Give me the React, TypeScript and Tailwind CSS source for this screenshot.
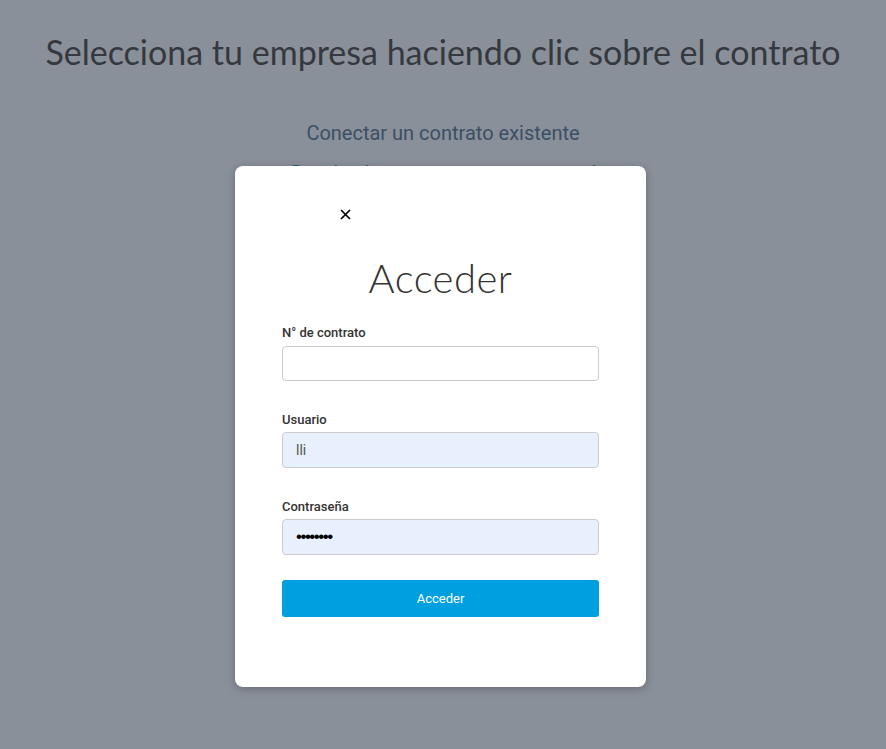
import React from "react";

export default function App() {
  return (
    <div className="relative w-full h-[749px] bg-[#8a9099] overflow-hidden">
      <div className="flex flex-col items-center pt-[30px]">
        <h1 className="text-[34px] leading-[44px] text-[#35393f] font-['Lato',sans-serif] font-normal">
          Selecciona tu empresa haciendo clic sobre el contrato
        </h1>
        <div className="mt-[44px] flex flex-col items-center gap-[10px] font-['Roboto',sans-serif] text-[20px] leading-[30px] text-[#3b4f66]">
          <span>Conectar un contrato existente</span>
          <span className="text-[#2f5d8a]">Dar de alta un nuevo contrato aquí</span>
        </div>
      </div>

      <div className="absolute top-[166px] left-[235px] w-[411px] h-[521px] bg-white rounded-[8px] shadow-[0_2px_8px_rgba(0,0,0,0.25)] px-[47px] pt-[38px] flex flex-col">
        <div className="pl-[58px] h-[20px] flex items-center">
          <svg width="11" height="11" viewBox="0 0 11 11" className="text-black">
            <path d="M1 1L10 10M10 1L1 10" stroke="currentColor" strokeWidth="1.7" />
          </svg>
        </div>
        <h2 className="mt-[30px] text-center text-[40px] leading-[48px] font-['Lato',sans-serif] font-light text-[#333] tracking-[0.5px]">
          Acceder
        </h2>
        <form className="mt-[23px] flex flex-col font-['Roboto',sans-serif]">
          <label className="text-[13px] leading-[15px] font-medium text-[#333]">N° de contrato</label>
          <input className="mt-[6px] h-[35px] w-full rounded-[4px] border border-[#cccccc] bg-white px-[13px] text-[14px] outline-none" />
          <label className="mt-[31px] text-[13px] leading-[15px] font-medium text-[#333]">Usuario</label>
          <input
            defaultValue="lli"
            className="mt-[5px] h-[36px] w-full rounded-[4px] border border-[#cccccc] bg-[#e8f0fe] px-[13px] text-[14px] text-[#555] outline-none font-['Roboto',sans-serif]"
          />
          <label className="mt-[31px] text-[13px] leading-[15px] font-medium text-[#333]">Contraseña</label>
          <input
            type="password"
            defaultValue="12345678"
            className="mt-[5px] h-[36px] w-full rounded-[4px] border border-[#cccccc] bg-[#e8f0fe] px-[13px] text-[17px] text-black outline-none tracking-[-1.5px] font-['Liberation_Sans',Arial,sans-serif]"
          />
          <button
            type="button"
            className="mt-[25px] h-[37px] w-full rounded-[3px] bg-[#009fdf] text-white text-[13px] font-normal font-['Roboto',sans-serif]"
          >
            Acceder
          </button>
        </form>
      </div>
    </div>
  );
}
